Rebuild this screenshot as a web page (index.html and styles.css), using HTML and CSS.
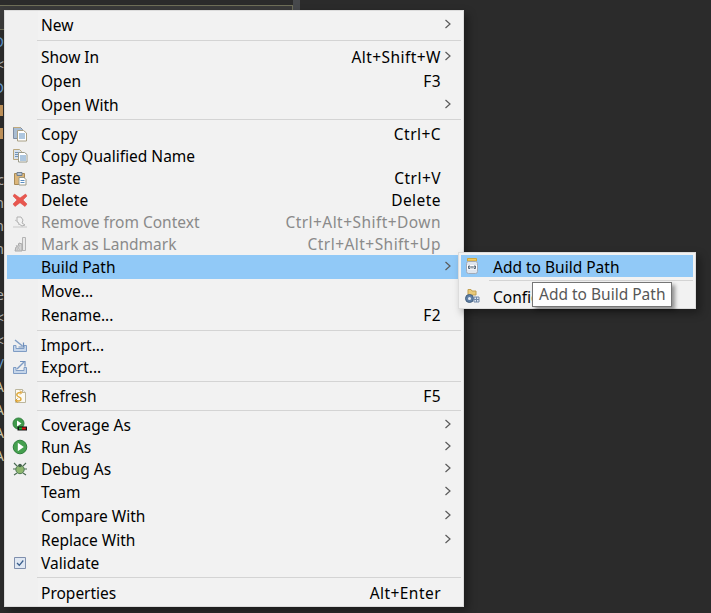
FILE: index.html
```html
<!DOCTYPE html>
<html lang="en">
<head>
<meta charset="utf-8">
<title>Context menu</title>
<link rel="stylesheet" href="styles.css">
</head>
<body>
<svg class="defs" width="0" height="0" aria-hidden="true">
  <defs>
    <symbol id="chev" viewBox="0 0 8 10"><path d="M1.500 1l4.500 4-4.500 4" fill="none" stroke="#5a5a5a" stroke-width="1.200"/></symbol>
  </defs>
</svg>
<div class="ide">
  <div class="topbar"><div class="panel-tab"></div><div class="sash"></div></div>
  <div class="crumbs">
    <div class="crumb c-orange"><span>O</span></div>
    <div class="crumb c-grey"><span>&lt;</span></div>
    <div class="crumb c-blue"><span>D</span></div>
    <div class="crumb"><i class="block"></i></div>
    <div class="crumb"><i class="block"></i></div>
    <div class="crumb"></div>
    <div class="crumb c-grey"><span>c</span></div>
    <div class="crumb c-grey"><span>n</span></div>
    <div class="crumb c-grey"><span>n</span></div>
    <div class="crumb c-grey"><span>n</span></div>
    <div class="crumb"></div>
    <div class="crumb c-grey"><span>e</span></div>
    <div class="crumb c-grey"><span>&lt;</span></div>
    <div class="crumb c-grey"><span>&lt;</span></div>
    <div class="crumb c-blue"><span>/</span></div>
    <div class="crumb c-tan"><span>A</span></div>
    <div class="crumb c-tan"><span>A</span></div>
    <div class="crumb c-tan"><span>A</span></div>
    <div class="crumb c-tan"><span>A</span></div>
  </div>
</div>

<div class="menu">
  <div class="row r24"><span class="ico"></span><span class="label">New</span><svg class="chev"><use href="#chev"/></svg></div>
  <div class="sep s8"></div>
  <div class="row r24"><span class="ico"></span><span class="label">Show In</span><span class="key">Alt+Shift+W</span><svg class="chev"><use href="#chev"/></svg></div>
  <div class="row r24"><span class="ico"></span><span class="label">Open</span><span class="key">F3</span><span class="nochev"></span></div>
  <div class="row r23"><span class="ico"></span><span class="label">Open With</span><svg class="chev"><use href="#chev"/></svg></div>
  <div class="sep"></div>
  <div class="row r22"><span class="ico"><svg width="16" height="16" viewBox="0 0 16 16"><path d="M1.500 1.500h7l2 2v9h-9z" fill="#a9bdd2" stroke="#7f8ea3"/><path d="M1.500 1.500h7" stroke="#c2a878"/><path d="M5.500 4.500h6l3 2.500v8h-9z" fill="#fff" stroke="#a89f84"/><path d="M7 8h6M7 10h6M7 12h6" stroke="#5d8fc0"/></svg></span><span class="label">Copy</span><span class="key">Ctrl+C</span><span class="nochev"></span></div>
  <div class="row r22"><span class="ico"><svg width="16" height="16" viewBox="0 0 16 16"><path d="M1.500 1.500h6l2 2v8h-8z" fill="#d9e2ec" stroke="#b9a77e"/><path d="M3 4.500h4M3 6.500h4M3 8.500h4" stroke="#6f93b8"/><path d="M6.500 4.500h6l2.500 2v7.500h-8.500z" fill="#fff" stroke="#9a9a8a"/><path d="M8 8h6M8 10h6M8 12h6" stroke="#5d8fc0"/></svg></span><span class="label">Copy Qualified Name</span></div>
  <div class="row r22"><span class="ico"><svg width="16" height="16" viewBox="0 0 16 16"><path d="M2.500 3.500h10v11h-10z" fill="#dcb67a" stroke="#a88a56"/><path d="M5 2.500h5v3h-5z" fill="#b8c4d0" stroke="#6f7f90"/><path d="M7 7.500h5l2 2v5.500h-7z" fill="#fff" stroke="#9a9a8a"/><path d="M8.500 10.500h4M8.500 12.500h4" stroke="#5d8fc0"/></svg></span><span class="label">Paste</span><span class="key">Ctrl+V</span><span class="nochev"></span></div>
  <div class="row r22"><span class="ico"><svg width="16" height="16" viewBox="0 0 16 16"><path d="M2.500 2l5.500 4 5.500-4 1.500 2-4 4 4 4-2 2.500-5-3.800-5 3.800-2-2.500 4-4-4-4z" fill="#e8574f" stroke="#d8453e" stroke-width=".5"/></svg></span><span class="label">Delete</span><span class="key">Delete</span><span class="nochev"></span></div>
  <div class="row r22 off"><span class="ico"><svg width="16" height="16" viewBox="0 0 16 16"><path d="M1 13h14" stroke="#c8c8c8"/><path d="M5 3h4l2 3-1 3 3 2-3 1-3-2-2-3z" fill="#f2f2f2" stroke="#b0b0b0"/><path d="M3 6l3 2 1 3" fill="none" stroke="#c0c0c0"/></svg></span><span class="label">Remove from Context</span><span class="key">Ctrl+Alt+Shift+Down</span><span class="nochev"></span></div>
  <div class="row r22 off"><span class="ico"><svg width="16" height="16" viewBox="0 0 16 16"><path d="M10.500 1.500h3v13h-3z" fill="#e8e8e8" stroke="#b4b4b4"/><path d="M3 15l1-4 2-1 1-3 3 1v7z" fill="#d4d4d4" stroke="#a8a8a8"/><path d="M4 9l4 5M8 9l-3 5" stroke="#bcbcbc"/></svg></span><span class="label">Mark as Landmark</span><span class="key">Ctrl+Alt+Shift+Up</span><span class="nochev"></span></div>
  <div class="row r24 hot"><span class="ico"></span><span class="label">Build Path</span><svg class="chev"><use href="#chev"/></svg></div>
  <div class="row r24"><span class="ico"></span><span class="label">Move...</span><span class="nochev"></span></div>
  <div class="row r24"><span class="ico"></span><span class="label">Rename...</span><span class="key">F2</span><span class="nochev"></span></div>
  <div class="sep"></div>
  <div class="row r22"><span class="ico"><svg width="16" height="16" viewBox="0 0 16 16"><path d="M1.500 8.500h2.500v3h8v-3h2.500v6h-13z" fill="#c6d6ea" stroke="#7f9cc4"/><path d="M3 3l7.500 6" stroke="#7f9cc4" stroke-width="1.500"/><path d="M11.500 5.500v4.500h-5" fill="none" stroke="#6f8fbc" stroke-width="1.200"/></svg></span><span class="label">Import...</span></div>
  <div class="row r22"><span class="ico"><svg width="16" height="16" viewBox="0 0 16 16"><path d="M1.500 8.500h2.500v3h8v-3h2.500v6h-13z" fill="#c6d6ea" stroke="#7f9cc4"/><path d="M5 10l7-7" stroke="#7f9cc4" stroke-width="1.500"/><path d="M8 2.500h5v5" fill="none" stroke="#6f8fbc" stroke-width="1.200"/></svg></span><span class="label">Export...</span></div>
  <div class="sep"></div>
  <div class="row r22"><span class="ico"><svg width="16" height="16" viewBox="0 0 16 16"><path d="M3.500 1.500h7l3 3v10h-10z" fill="#fbfaf4" stroke="#bcb69c"/><path d="M10.500 1.500v3h3" fill="#eee" stroke="#bcb69c"/><path d="M9.500 4.500C6.500 4 4 5.500 5 7.500s4 1.500 4 3.500-2.500 2.500-5 1.500" fill="none" stroke="#e0a93a" stroke-width="1.500"/><path d="M8 2.500l2 2-2 2M5.500 10.500l-2 2 2 2" fill="none" stroke="#d89a2c"/></svg></span><span class="label">Refresh</span><span class="key">F5</span><span class="nochev"></span></div>
  <div class="sep"></div>
  <div class="row r22"><span class="ico"><svg width="16" height="16" viewBox="0 0 16 16"><circle cx="6.500" cy="6.500" r="5.500" fill="#3f9a4a" stroke="#2f7f3c"/><path d="M5 3.500l4.500 3-4.500 3z" fill="#fff"/><path d="M5.500 9.500h9.500v4h-9.500z" fill="#111"/><path d="M7 10.500h3v2h-3z" fill="#18b030"/><path d="M10 10.500h3.800v2h-3.800z" fill="#e01010"/></svg></span><span class="label">Coverage As</span><svg class="chev"><use href="#chev"/></svg></div>
  <div class="row r22"><span class="ico"><svg width="16" height="16" viewBox="0 0 16 16"><circle cx="8" cy="8" r="6.800" fill="#45a04f" stroke="#2f7f3c"/><path d="M5.800 3.800l6 4.200-6 4.200z" fill="#fff"/></svg></span><span class="label">Run As</span><svg class="chev"><use href="#chev"/></svg></div>
  <div class="row r22"><span class="ico"><svg width="16" height="16" viewBox="0 0 16 16"><path d="M2 2l3 3M14 2l-3 3M1 8h3M12 8h3M2 14l3-2M14 14l-3-2" stroke="#4a6a52" stroke-width="1.100"/><circle cx="8" cy="8.500" r="4.200" fill="#8db66e" stroke="#4f7a54"/><circle cx="8" cy="4.500" r="1.800" fill="#46644e"/></svg></span><span class="label">Debug As</span><svg class="chev"><use href="#chev"/></svg></div>
  <div class="row r24"><span class="ico"></span><span class="label">Team</span><svg class="chev"><use href="#chev"/></svg></div>
  <div class="row r24"><span class="ico"></span><span class="label">Compare With</span><svg class="chev"><use href="#chev"/></svg></div>
  <div class="row r24"><span class="ico"></span><span class="label">Replace With</span><svg class="chev"><use href="#chev"/></svg></div>
  <div class="row r22"><span class="ico"><svg width="16" height="16" viewBox="0 0 16 16"><path d="M2.500 2.500h11v11h-11z" fill="#dfe7f2" stroke="#7f8fad"/><path d="M5 8l2.300 2.300 4-4.800" fill="none" stroke="#3a5f8c" stroke-width="1.300"/></svg></span><span class="label">Validate</span></div>
  <div class="sep s8"></div>
  <div class="row r22"><span class="ico"></span><span class="label">Properties</span><span class="key">Alt+Enter</span><span class="nochev"></span></div>
</div>

<div class="submenu">
  <div class="subrow subhot"><span class="subico"><svg width="16" height="18" viewBox="0 0 16 18"><path d="M3.500 1.500h9v2.500h-9z" fill="#efc95e" stroke="#cda63e"/><rect x="2.500" y="4.500" width="11" height="12" rx="2" fill="#dfe6ef" stroke="#a0aab8"/><path d="M3 8h10v4.500H3z" fill="#fff"/><path d="M4.500 9h1.500v2.500H4.500zM10 9h1.500v2.500H10z" fill="none" stroke="#34495e" stroke-width=".8"/><path d="M8 9v2.500" stroke="#34495e"/></svg></span><span class="label sublabel">Add to Build Path</span></div>
  <div class="subsep"></div>
  <div class="subrow"><span class="subico"><svg width="16" height="16" viewBox="0 0 16 16"><path d="M4 1.500h3l1 1.500h4v4H4z" fill="#e8c97a" stroke="#c2a050"/><circle cx="5.500" cy="10.500" r="4" fill="#5f7fa5" stroke="#44607f"/><circle cx="5.500" cy="10.500" r="1.500" fill="#e6edf5"/><path d="M10 9h5v5h-5z" fill="#dfe7f2" stroke="#7088a8"/><path d="M12.500 9v5M10 11.500h5" stroke="#7088a8"/></svg></span><span class="label sublabel">Configure Build Path...</span></div>
</div>
<div class="tooltip">Add to Build Path</div>
</body>
</html>
```
FILE: styles.css
```css
* { box-sizing: border-box; }
html, body { margin: 0; height: 100%; }
body {
  width: 711px;
  height: 613px;
  overflow: hidden;
  background: #2b2b2b;
  position: relative;
  font-family: "Noto Sans", "Open Sans", sans-serif;
  font-size: 15.5px;
  color: #000;
}
.defs { position: absolute; }
.ide { height: 613px; }
.topbar { display: flex; height: 30px; padding-top: 5px; }
.panel-tab {
  width: 293px;
  height: 25px;
  background: #3a3a3a;
  border: 1px solid #6e6e58;
  border-left: 0;
}
.sash { width: 7px; margin-top: -5px; height: 30px; background: #47494c; }
.crumbs { display: flex; flex-direction: column; }
.crumb {
  width: 4px;
  height: 23px;
  overflow: hidden;
  display: flex;
  justify-content: flex-end;
  align-items: center;
  font-size: 14px;
  line-height: 23px;
  color: #c8c8c8;
}
.crumb span { flex: none; }
.c-orange { color: #5d93c9; }
.c-blue { color: #6a9fd0; }
.c-grey { color: #b0b0b0; }
.c-tan { color: #cfc7a8; }
.block { display: block; flex: none; width: 3px; height: 11px; margin-right: 1px; background: #c0925a; }

.menu {
  position: absolute;
  left: 4px;
  top: 10px;
  width: 460px;
  height: 597px;
  padding: 2px 2px 0;
  background: linear-gradient(#f0f0f0, #f0f0f0) left / 33px 100% no-repeat, #f2f2f2;
  border: 1px solid #dcdcdc;
  box-shadow: 4px 4px 8px rgba(0, 0, 0, .35);
}
.row { display: flex; align-items: center; white-space: nowrap; line-height: 20px; }
.r24 { height: 24px; }
.r23 { height: 23px; }
.r22 { height: 22px; }
.hot { background: #91c9f7; }
.off { color: #8a8a8a; }
.ico {
  flex: none;
  width: 34px;
  height: 16px;
  padding-left: 5px;
  display: flex;
  align-items: center;
}
.label { flex: 1; }
.key { flex: none; letter-spacing: .45px; }
.chev { flex: none; width: 8px; height: 10px; margin: -2px 9px 0 3px; }
.nochev { flex: none; width: 20px; }
.sep {
  height: 7px;
  margin-left: 30px;
  background: linear-gradient(#d4d4d4, #d4d4d4) center / 100% 1px no-repeat;
}
.s8 { height: 8px; background-position: 0 3px; }

.submenu {
  position: absolute;
  left: 458px;
  top: 252px;
  width: 238px;
  height: 57px;
  padding: 2px;
  background: #f2f2f2;
  border: 1px solid #dcdcdc;
  box-shadow: 4px 4px 8px rgba(0, 0, 0, .35);
}
.subrow { display: flex; align-items: center; height: 23px; white-space: nowrap; overflow: hidden; line-height: 20px; }
.subhot { height: 22px; background: #91c9f7; }
.subico { flex: none; width: 32px; padding-left: 3px; display: flex; align-items: center; }
.sublabel { padding-top: 2px; }
.subsep { height: 7px; margin-left: 28px; background: linear-gradient(#d4d4d4, #d4d4d4) center / 100% 1px no-repeat; }

.tooltip {
  position: absolute;
  left: 532px;
  top: 282px;
  width: 140px;
  height: 25px;
  padding-left: 6px;
  line-height: 22px;
  white-space: nowrap;
  background: #fff;
  border: 1px solid #767676;
  color: #575757;
  box-shadow: 3px 3px 4px rgba(0, 0, 0, .4);
}
```
